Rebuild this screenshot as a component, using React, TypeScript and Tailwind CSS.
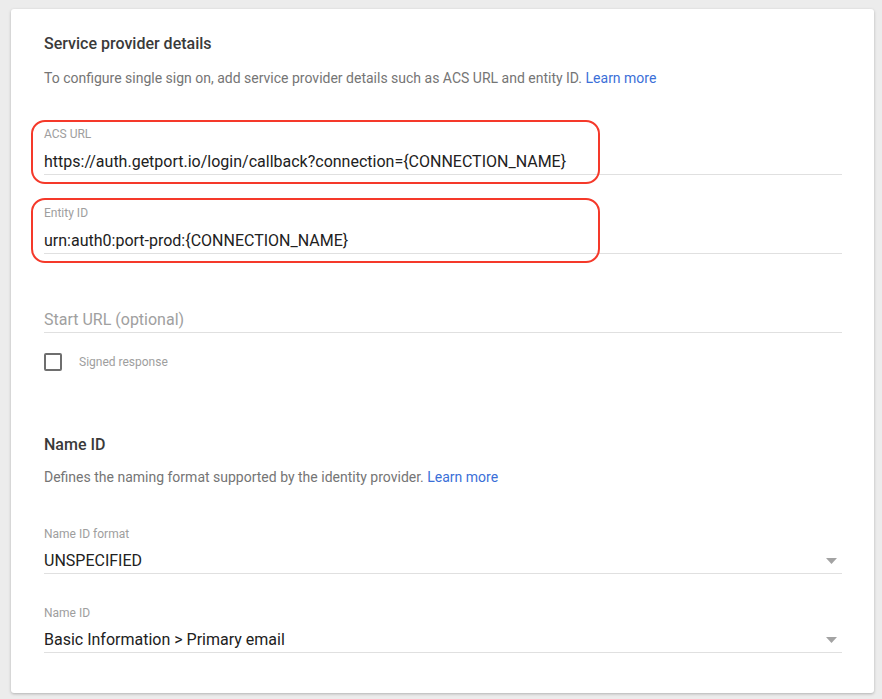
import React from "react";

const font = { fontFamily: "Roboto, 'Liberation Sans', sans-serif" };

// Red annotation ring drawn over a field
function Highlight({ top, height }: { top: number; height: number }) {
  return (
    <div
      className="pointer-events-none absolute left-[-13px] w-[569px] rounded-[14px] border-2 border-[#f5392a]"
      style={{ top, height }}
    />
  );
}

function TextField({
  label,
  value,
  highlight,
}: {
  label: string;
  value: string;
  highlight?: { top: number; height: number };
}) {
  return (
    <div className="relative">
      <div className="text-[12px] leading-4 text-[#9e9e9e]">{label}</div>
      <div className="mt-[8px] border-b border-[#e0e0e0] text-[16px] leading-6 text-[#212121]">
        {value}
      </div>
      {highlight && <Highlight {...highlight} />}
    </div>
  );
}

function SelectField({ label, value }: { label: string; value: string }) {
  return (
    <div>
      <div className="text-[12px] leading-4 text-[#9e9e9e]">{label}</div>
      <div className="mt-[7px] flex items-center justify-between border-b border-[#e0e0e0] pr-[5px] text-[16px] leading-6 text-[#212121]">
        <span>{value}</span>
        <svg width="11" height="6" viewBox="0 0 11 6">
          <path d="M0 0 L11 0 L5.5 6 Z" fill="#a3a3a3" />
        </svg>
      </div>
    </div>
  );
}

export default function App() {
  return (
    <div className="min-h-[699px] bg-[#ececec] pl-[11px] pr-[8px] pt-[9px]" style={font}>
      <div className="h-[684px] rounded-[3px] bg-white pb-[41px] pl-[33px] pr-[32px] pt-[25px] shadow-[0_1px_3px_rgba(0,0,0,0.25)]">
        <h2 className="text-[16px] font-medium leading-5 text-[#3a3a3a]">Service provider details</h2>
        <p className="mt-[14px] text-[14px] leading-5 text-[#757575]">
          To configure single sign on, add service provider details such as ACS URL and entity ID.{" "}
          <a className="text-[#3b6fd8]">Learn more</a>
        </p>

        <div className="mt-[38px]">
          <TextField
            label="ACS URL"
            value="https://auth.getport.io/login/callback?connection={CONNECTION_NAME}"
            highlight={{ top: -6, height: 64 }}
          />
        </div>
        <div className="mt-[30px]">
          <TextField
            label="Entity ID"
            value="urn:auth0:port-prod:{CONNECTION_NAME}"
            highlight={{ top: -7, height: 65 }}
          />
        </div>

        <div className="mt-[54px] border-b border-[#e0e0e0] text-[16px] leading-6 text-[#a0a0a0]">
          Start URL (optional)
        </div>

        <label className="mt-[20px] flex items-center gap-[17px]">
          <span className="block h-[18px] w-[18px] rounded-[2px] border-2 border-[#6e6e6e]" />
          <span className="text-[12px] text-[#9e9e9e]">Signed response</span>
        </label>

        <h2 className="mt-[64px] text-[16px] font-medium leading-5 text-[#3a3a3a]">Name ID</h2>
        <p className="mt-[12px] text-[14px] leading-5 text-[#757575]">
          Defines the naming format supported by the identity provider.{" "}
          <a className="text-[#3b6fd8]">Learn more</a>
        </p>

        <div className="mt-[39px]">
          <SelectField label="Name ID format" value="UNSPECIFIED" />
        </div>
        <div className="mt-[31px]">
          <SelectField label="Name ID" value="Basic Information > Primary email" />
        </div>
      </div>
    </div>
  );
}
